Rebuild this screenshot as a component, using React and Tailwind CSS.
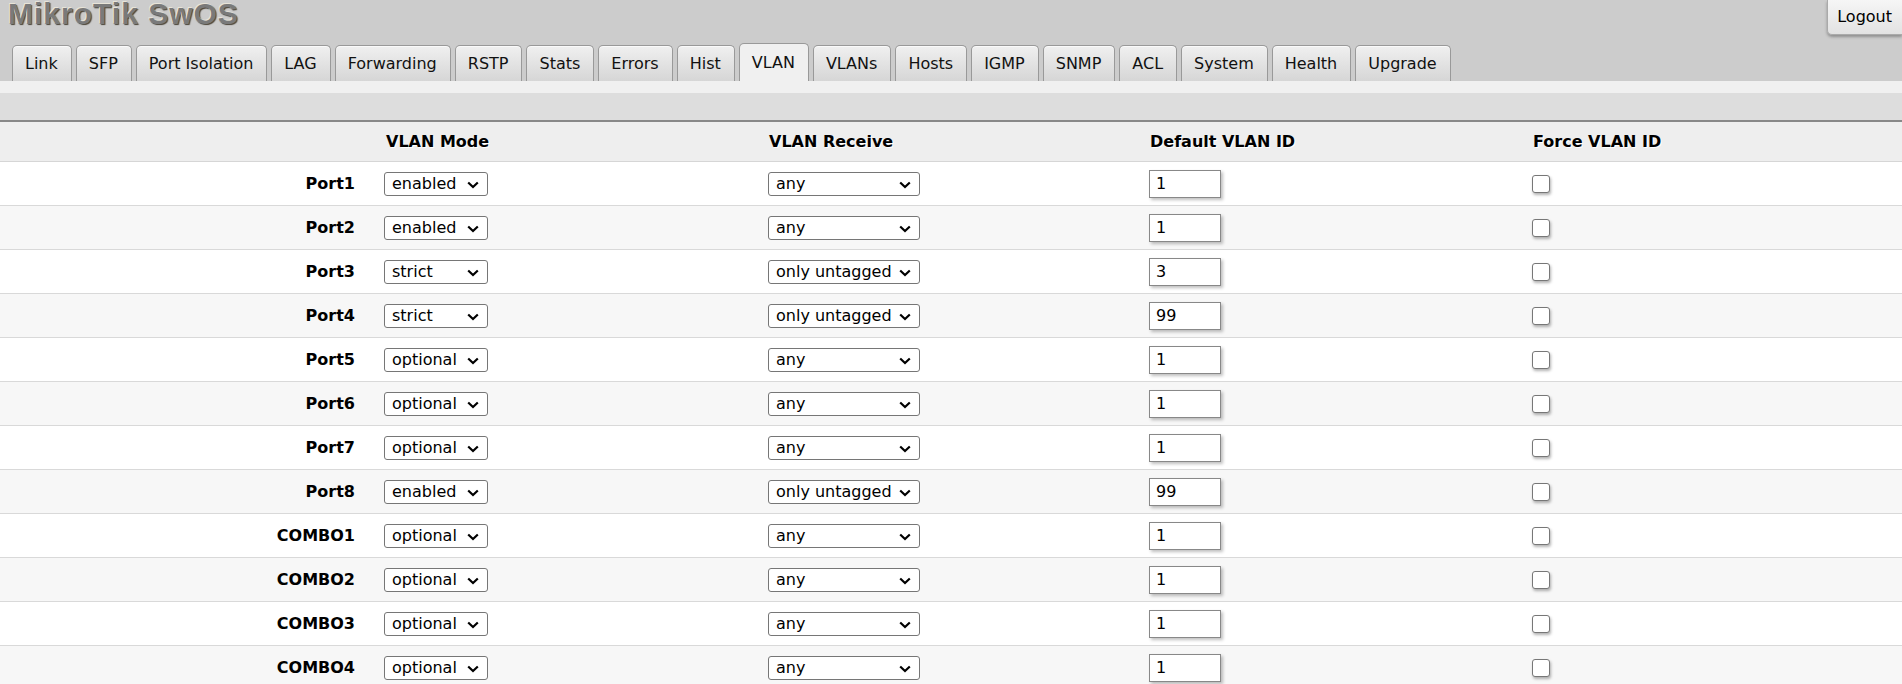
import React from "react";

const tabs = [
  "Link", "SFP", "Port Isolation", "LAG", "Forwarding", "RSTP", "Stats", "Errors", "Hist",
  "VLAN", "VLANs", "Hosts", "IGMP", "SNMP", "ACL", "System", "Health", "Upgrade",
];

const rows = [
  { name: "Port1", mode: "enabled", receive: "any", id: "1" },
  { name: "Port2", mode: "enabled", receive: "any", id: "1" },
  { name: "Port3", mode: "strict", receive: "only untagged", id: "3" },
  { name: "Port4", mode: "strict", receive: "only untagged", id: "99" },
  { name: "Port5", mode: "optional", receive: "any", id: "1" },
  { name: "Port6", mode: "optional", receive: "any", id: "1" },
  { name: "Port7", mode: "optional", receive: "any", id: "1" },
  { name: "Port8", mode: "enabled", receive: "only untagged", id: "99" },
  { name: "COMBO1", mode: "optional", receive: "any", id: "1" },
  { name: "COMBO2", mode: "optional", receive: "any", id: "1" },
  { name: "COMBO3", mode: "optional", receive: "any", id: "1" },
  { name: "COMBO4", mode: "optional", receive: "any", id: "1" },
];

const modes = ["disabled", "optional", "enabled", "strict"];
const receives = ["any", "only tagged", "only untagged"];

const Select = ({ value, options, width }) => (
  <div className={`relative inline-flex ${width}`}>
    <select
      defaultValue={value}
      className="appearance-none w-full h-[24px] border border-[#767676] rounded-[3px] bg-white pl-[7px] pr-6 text-[16px] leading-[22px] text-black outline-none"
    >
      {options.map((o) => (
        <option key={o}>{o}</option>
      ))}
    </select>
    <svg
      className="pointer-events-none absolute right-[9px] top-[9px] w-[12px] h-[8px]"
      viewBox="0 0 12 8"
    >
      <path d="M1.2 1.5l4.8 4.6 4.8-4.6" stroke="#000" strokeWidth="2.2" fill="none" />
    </svg>
  </div>
);

export default function App() {
  return (
    <div className="min-h-screen bg-white text-black font-['DejaVu_Sans','Liberation_Sans',sans-serif] text-[16px]">
      <header className="bg-[#cccccc]">
        <div className="flex justify-between items-start h-[43px]">
          <h1 className="pl-[8px] text-[30px] leading-[28px] font-bold tracking-[1px] text-[#7a7a7a] font-['Liberation_Sans',sans-serif] [text-shadow:-1px_-1px_0_#e8e4d8,1px_1px_1px_#4a4438]">
            MikroTik SwOS
          </h1>
          <button className="h-[35px] pl-[9px] pr-[10px] border-l border-b border-[#aaa] rounded-bl-[5px] bg-linear-to-b from-[#f6f6f6] to-[#e2e2e2] shadow-[0_2px_3px_rgba(0,0,0,0.3)] text-black">
            Logout
          </button>
        </div>
        <nav className="flex items-end gap-[4px] pl-[12px] h-[38px]">
          {tabs.map((t) =>
            t === "VLAN" ? (
              <div
                key={t}
                className="h-[38px] pl-[12px] pr-[13px] flex items-center border border-b-0 border-[#999] rounded-t-[5px] bg-[#f0f0f0] text-[#111]"
              >
                {t}
              </div>
            ) : (
              <div
                key={t}
                className="h-[36px] pl-[12px] pr-[13px] flex items-center border border-b-0 border-[#999] rounded-t-[5px] bg-linear-to-b from-[#f0f0f0] to-[#d6d6d6] text-[#111] shadow-[inset_0_1px_0_#fafafa]"
              >
                {t}
              </div>
            )
          )}
        </nav>
      </header>
      <div className="h-[12px] bg-[#f0f0f0]" />
      <div className="h-[29px] bg-[#dddddd] border-b-2 border-[#888]" />

      <div className="grid grid-cols-[384px_384px_381px_383px_1fr] h-[40px] items-center bg-[#eeeeee] border-b border-[#d6d6d6] font-bold [text-shadow:1px_1px_0_#fff]">
        <div />
        <div className="pl-[2px] pt-[1px]">VLAN Mode</div>
        <div className="pl-[1px] pt-[1px]">VLAN Receive</div>
        <div className="pl-[1px] pt-[1px]">Default VLAN ID</div>
        <div className="pl-[1px] pt-[1px]">Force VLAN ID</div>
      </div>

      {rows.map((r, i) => (
        <div
          key={r.name}
          className={`grid grid-cols-[384px_384px_381px_383px_1fr] h-[44px] items-center border-b border-[#d9d9d9] ${
            i % 2 ? "bg-[#f7f7f7]" : "bg-white"
          }`}
        >
          <div className="text-right pr-[29px] font-bold pt-[1px]">{r.name}</div>
          <div>
            <Select value={r.mode} options={modes} width="w-[104px]" />
          </div>
          <div>
            <Select value={r.receive} options={receives} width="w-[152px]" />
          </div>
          <div>
            <input
              type="text"
              defaultValue={r.id}
              className="w-[72px] h-[28px] border border-[#888] bg-white px-[6px] text-[16px] text-black outline-none shadow-[2px_2px_3px_rgba(0,0,0,0.25)]"
            />
          </div>
          <div className="flex">
            <input
              type="checkbox"
              className="appearance-none w-[18px] h-[18px] border border-[#777] rounded-[3px] bg-white shadow-[1px_2px_3px_rgba(0,0,0,0.3)]"
            />
          </div>
        </div>
      ))}
    </div>
  );
}
